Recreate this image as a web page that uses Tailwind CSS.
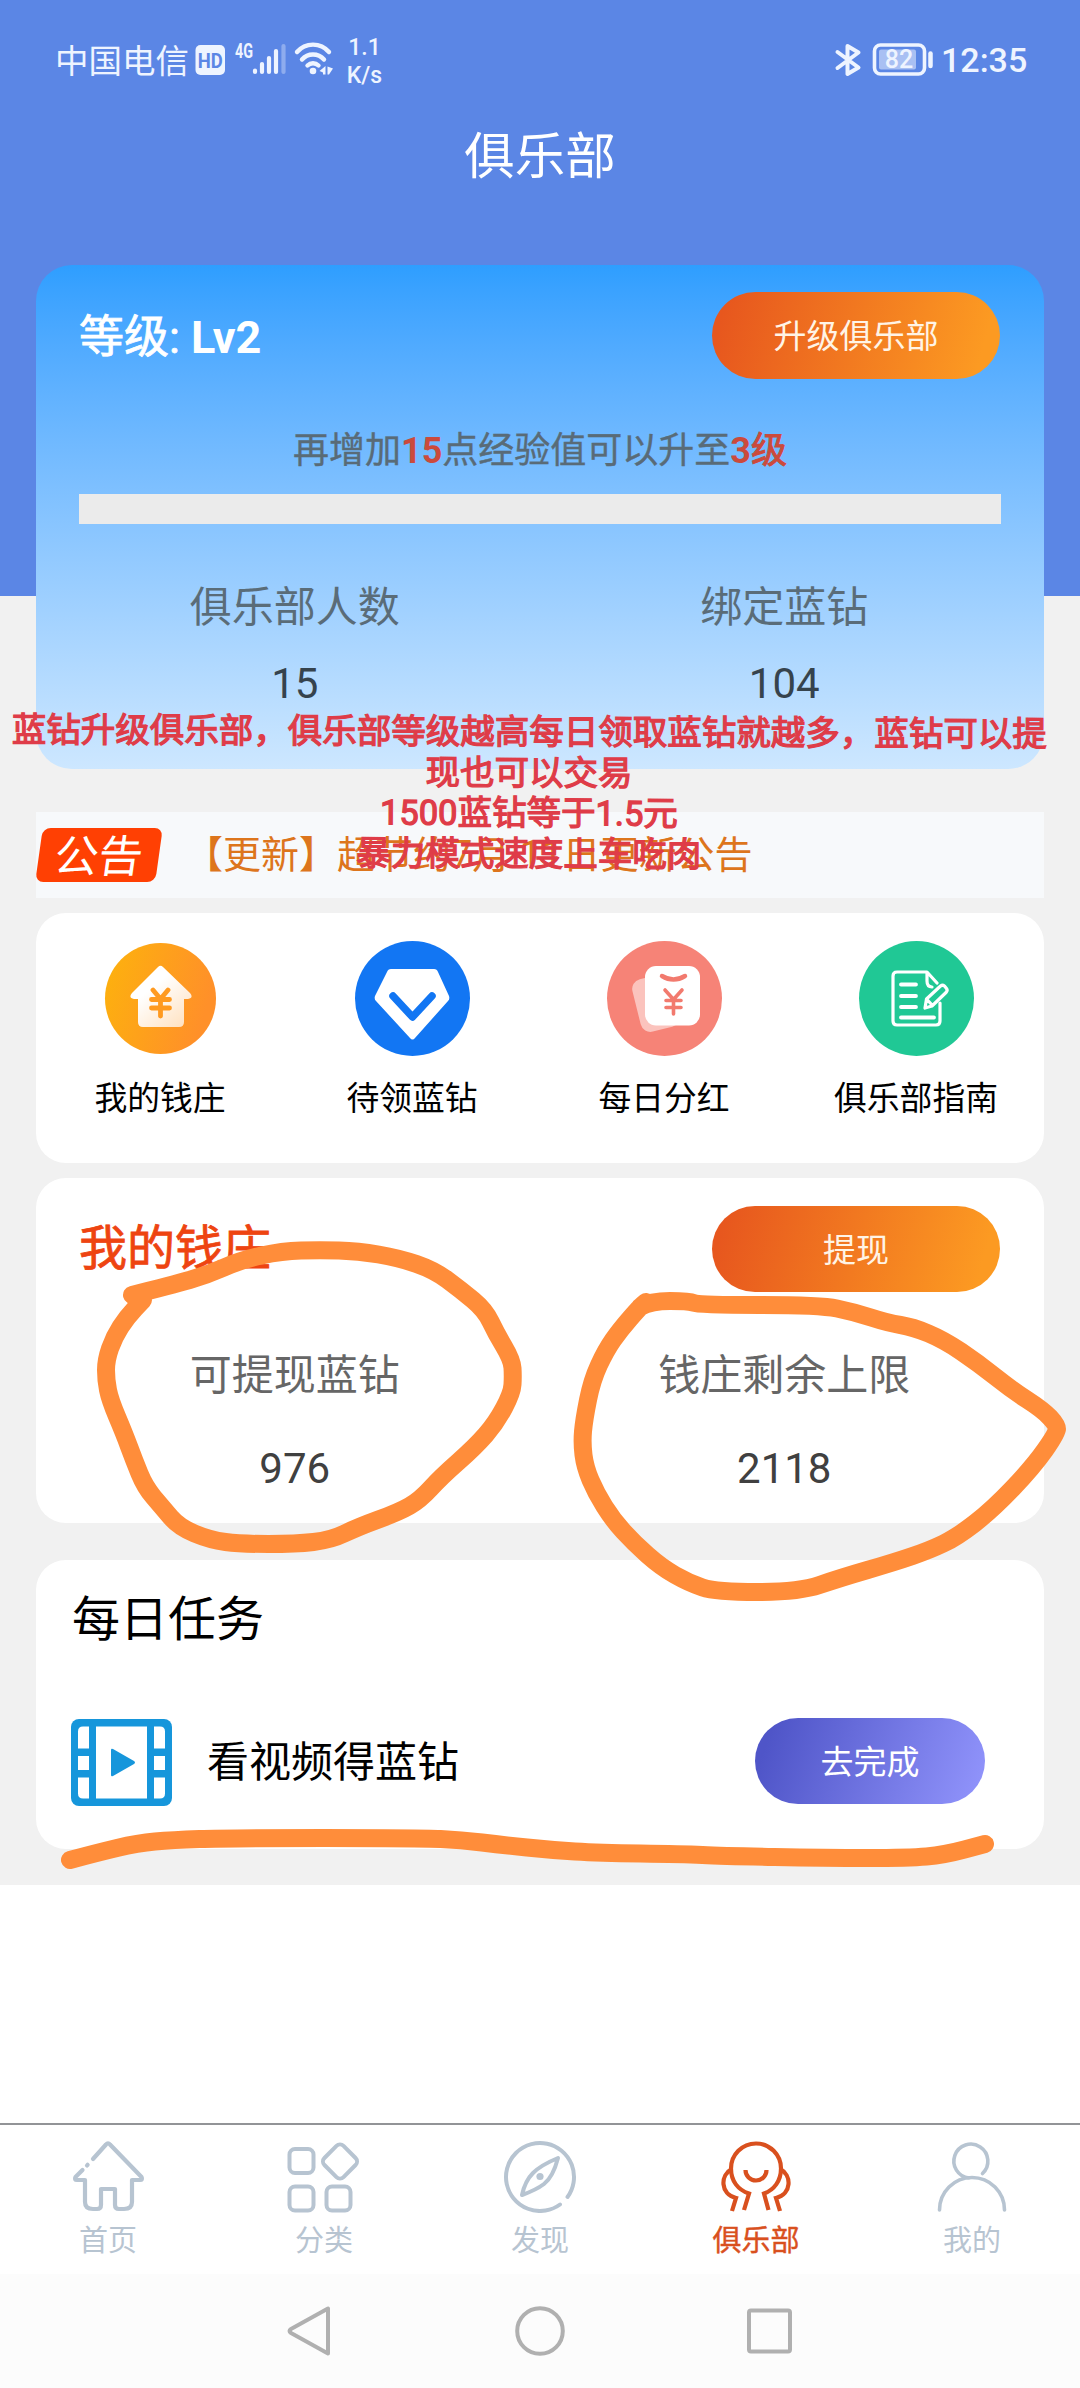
<!DOCTYPE html>
<html lang="zh-CN">
<head>
<meta charset="utf-8">
<title>俱乐部</title>
<script src="https://cdn.jsdelivr.net/npm/@tailwindcss/browser@4"></script>
</head>
<body class="bg-white">
<div class="relative flex h-[2388px] w-[1080px] flex-col overflow-hidden bg-white font-['Roboto','Noto_Sans_CJK_SC',sans-serif] text-black">

  <!-- status bar + title -->
  <header class="flex h-[265px] shrink-0 flex-col bg-[#5b86e5]">
    <div class="flex h-[120px] items-center justify-between pr-[55px] pl-[55px] text-[#eef4ff]">
      <div class="flex items-center">
        <span class="w-[135px] pt-[4px] text-[33.5px] leading-none whitespace-nowrap">中国电信</span>
        <svg class="h-[40px] w-[150px]" viewBox="190 40 150 40" fill="none">
          <rect x="195.500" y="45" width="29.500" height="30" rx="5" fill="#eef4ff"/>
          <text x="210.300" y="67.500" text-anchor="middle" font-size="21" font-weight="700" textLength="25" lengthAdjust="spacingAndGlyphs" fill="#5b86e5">HD</text>
          <text x="235" y="57.500" font-size="20" font-weight="700" textLength="18" lengthAdjust="spacingAndGlyphs" fill="#eef4ff">4G</text>
          <g stroke="#eef4ff" stroke-width="4.200" stroke-linecap="round">
            <path d="M255 70.500V72M262 64V72M269 58V72M276 51V72"/>
            <path d="M283.500 46V72" opacity=".35"/>
          </g>
          <g stroke="#eef4ff" stroke-width="4.400" stroke-linecap="round">
            <path d="M297 52a21 21 0 0 1 32 0M302 59.500a14.500 14.500 0 0 1 22 0M307.500 65.500a8 8 0 0 1 11 0"/>
          </g>
          <circle cx="313" cy="71" r="3.300" fill="#eef4ff"/>
          <path d="M319.500 71l6-5v8.500h-2.500v-2zM327.500 66.500l5.500 2-4 6h-1.500z" fill="#eef4ff"/>
        </svg>
        <div class="ml-[6px] flex w-[37px] flex-col items-center pt-[4px] text-[23px] leading-[28px] font-medium"><span>1.1</span><span>K/s</span></div>
      </div>
      <div class="flex items-center">
        <svg class="h-[40px] w-[110px]" viewBox="830 40 110 40" fill="none" stroke="#eef4ff">
          <path d="M837.500 52L858.500 67.500 847.500 74V46L858.500 52.500 837.500 68" stroke-width="4" stroke-linecap="round" stroke-linejoin="round"/>
          <rect x="874.500" y="45" width="50" height="29" rx="6" stroke-width="3.600"/>
          <rect x="879" y="49.500" width="37" height="20" rx="2" fill="#a9c0f3" stroke="none"/>
          <path d="M930.500 53.500V66" stroke-width="4.500" stroke-linecap="round"/>
          <text x="899" y="68" text-anchor="middle" font-size="25" font-weight="500" fill="#eef4ff" stroke="none">82</text>
        </svg>
        <span class="ml-[1px] w-[84px] text-[34px] leading-none font-medium whitespace-nowrap">12:35</span>
      </div>
    </div>
    <h1 class="flex h-[74px] items-center justify-center text-[50.5px] leading-none text-white">俱乐部</h1>
  </header>

  <main class="flex h-[1620px] shrink-0 flex-col bg-[linear-gradient(#5b86e5_331px,#f1f1f1_331px)] px-[36px]">
    <!-- level card -->
    <section class="flex h-[504px] shrink-0 flex-col rounded-[36px] bg-linear-to-b from-[#2e9eff] to-[#cde7ff] pt-[27px]">
      <div class="flex h-[87px] items-center justify-between pr-[44px] pl-[43px]">
        <h2 class="pt-[3px] text-[45px] leading-none text-white [-webkit-text-stroke:0.8px]">等级: <span class="font-bold [-webkit-text-stroke:0]">Lv2</span></h2>
        <button class="flex h-[87px] w-[288px] items-center justify-center rounded-full bg-[linear-gradient(105deg,#e7571e_5%,#fc9a22_92%)] pt-[2px] text-[33px] leading-none text-[#fff4e6]">升级俱乐部</button>
      </div>
      <p class="mt-[45px] flex h-[50px] items-center justify-center pt-[4px] text-[36px] leading-none text-[#596b77] [-webkit-text-stroke:0.4px]"><span>再增加<b class="font-bold text-[#cb4a3c] [-webkit-text-stroke:0]">15</b>点经验值可以升至<b class="font-bold text-[#cb4a3c] [-webkit-text-stroke:0]">3<span class="font-normal [-webkit-text-stroke:1px]">级</span></b></span></p>
      <div class="mx-[43px] mt-[20px] h-[30px] bg-[#ebebeb]"></div>
      <div class="mr-[15px] ml-[14px] mt-[52px] grid grid-cols-2 text-center">
        <div><div class="flex h-[60px] items-center justify-center pt-[4px] text-[42px] leading-none text-[#5a6c78]">俱乐部人数</div><div class="mt-[18px] flex h-[60px] items-center justify-center text-[42px] leading-none text-[#36434d]">15</div></div>
        <div><div class="flex h-[60px] items-center justify-center pt-[4px] text-[42px] leading-none text-[#5a6c78]">绑定蓝钻</div><div class="mt-[18px] flex h-[60px] items-center justify-center text-[42px] leading-none text-[#36434d]">104</div></div>
      </div>
    </section>

    <!-- notice -->
    <section class="mt-[43px] flex h-[86px] shrink-0 items-center bg-[#f7f9fb]">
      <div class="ml-[3px] flex h-[54px] w-[120px] -skew-x-8 items-center justify-center rounded-[8px] bg-[#ff4003] pt-[3px] text-[44px] leading-none font-normal text-white">公告</div>
      <p class="ml-[26px] text-[38px] leading-none whitespace-nowrap text-[#dd751c]">【更新】超节约7月 11日更新公告</p>
    </section>

    <!-- shortcuts -->
    <section class="mt-[15px] grid h-[250px] shrink-0 grid-cols-4 rounded-[30px] bg-white pt-[28px] text-[32.8px]">
      <a class="flex flex-col items-center -translate-x-[2px]">
        <svg class="size-[115px]" viewBox="0 0 115 115">
          <defs>
            <linearGradient id="gold" x1="0" y1="0" x2="1" y2=".3"><stop offset="0" stop-color="#fdb30c"/><stop offset="1" stop-color="#ff9029"/></linearGradient>
            <linearGradient id="wall" x1=".3" y1=".4" x2=".8" y2="1"><stop offset="0" stop-color="#fff"/><stop offset="1" stop-color="#ffe3c4"/></linearGradient>
          </defs>
          <circle cx="57.500" cy="57.500" r="55.500" fill="url(#gold)"/>
          <path d="M55 26q2.500-2.500 5 0L87 52q4 5-2 6h-4v23q0 5-5 5H40q-5 0-5-5V58h-4q-6-1-2-6z" fill="url(#wall)"/>
          <path d="M50 49l7.500 9 7.500-9M57.500 58v17M48.500 58.500h18M48.500 67h18" fill="none" stroke="#ff9a20" stroke-width="4.800" stroke-linecap="round" stroke-linejoin="round"/>
        </svg>
        <span class="mt-[27px] leading-none">我的钱庄</span>
      </a>
      <a class="flex flex-col items-center -translate-x-[2px]">
        <svg class="size-[115px]" viewBox="0 0 115 115">
          <circle cx="57.500" cy="57.500" r="57.500" fill="#1276f3"/>
          <path d="M36 28h43q3 0 4 3l11 24q1 3-1 5L60 97q-2.500 3-5 0L21 60q-2-2-1-5l12-24q1-3 4-3z" fill="#fff"/>
          <path d="M38 55l19.500 21L77 55" fill="none" stroke="#1276f3" stroke-width="7.500" stroke-linecap="round" stroke-linejoin="round"/>
        </svg>
        <span class="mt-[27px] leading-none">待领蓝钻</span>
      </a>
      <a class="flex flex-col items-center -translate-x-[2px]">
        <svg class="size-[115px]" viewBox="0 0 115 115">
          <circle cx="57.500" cy="57.500" r="57.500" fill="#f68377"/>
          <rect x="29" y="35" width="40" height="54" rx="10" fill="#fbc3bd" transform="rotate(-14 49 62)"/>
          <rect x="38" y="25" width="55" height="59.500" rx="11" fill="#fff"/>
          <g fill="none" stroke="#f27a6e" stroke-linecap="round" stroke-linejoin="round"><path d="M55 35q11.500 7 23 0" stroke-width="4.500"/><path d="M58 49l8.500 9.500 8.500-9.500M66.500 58v15M59 59.500h15M59 66.500h15" stroke-width="3.600"/></g>
        </svg>
        <span class="mt-[27px] leading-none">每日分红</span>
      </a>
      <a class="flex flex-col items-center -translate-x-[2px]">
        <svg class="size-[115px]" viewBox="0 0 115 115">
          <circle cx="57.500" cy="57.500" r="57.500" fill="#20c895"/>
          <g fill="none" stroke="#fff" stroke-width="3.200" stroke-linecap="round" stroke-linejoin="round">
            <path d="M81 62V80q0 4-4 4H38q-4 0-4-4V35q0-4 4-4h30l10 11M68 31v9q0 6 5 6"/>
            <path d="M42 43.500h15M42 55h15M42 66h15M42 76.500h33" stroke-width="3.800"/>
            <path d="M66 67l1.500-9 14-13q2-1.500 4 0l2 2.500q1.500 2-.5 4L73 65zM67.500 58l6 6.500"/>
          </g>
        </svg>
        <span class="mt-[27px] leading-none">俱乐部指南</span>
      </a>
    </section>

    <!-- bank -->
    <section class="mt-[15px] flex h-[345px] shrink-0 flex-col rounded-[30px] bg-white pt-[28px]">
      <div class="flex h-[86px] items-center justify-between pr-[44px] pl-[43px]">
        <h2 class="text-[48px] leading-none text-[#ee4411] [-webkit-text-stroke:0.8px]">我的钱庄</h2>
        <button class="flex h-[86px] w-[288px] items-center justify-center rounded-full bg-[linear-gradient(105deg,#e7571e_5%,#fc9a22_92%)] pt-[2px] text-[33px] leading-none text-[#fff4e6]">提现</button>
      </div>
      <div class="mr-[15px] ml-[14px] mt-[52px] grid grid-cols-2 text-center">
        <div><div class="flex h-[60px] items-center justify-center pt-[3px] text-[42px] leading-none text-[#666]">可提现蓝钻</div><div class="mt-[35px] flex h-[60px] items-center justify-center text-[42px] leading-none text-[#404040]">976</div></div>
        <div><div class="flex h-[60px] items-center justify-center pt-[3px] text-[42px] leading-none text-[#666]">钱庄剩余上限</div><div class="mt-[35px] flex h-[60px] items-center justify-center text-[42px] leading-none text-[#404040]">2118</div></div>
      </div>
    </section>

    <!-- daily tasks -->
    <section class="mt-[37px] flex h-[289px] shrink-0 flex-col rounded-[30px] bg-white pt-[27px]">
      <h2 class="flex h-[60px] items-center pt-[6px] pl-[36px] text-[48px] leading-none">每日任务</h2>
      <div class="mt-[71px] flex h-[86px] items-center pr-[59px] pl-[35px]">
        <svg class="mt-[2px] h-[87px] w-[101px] shrink-0" viewBox="0 0 101 87">
          <rect width="101" height="87" rx="8" fill="#1696db"/>
          <g fill="#fff">
            <rect x="25" y="7.500" width="51" height="72"/>
            <path d="M18 7.500h-6q-5 0-5 5v17h11zM7 37h11v14H7zM7 58.500h11v21h-6q-5 0-5-5zM83 7.500h6q5 0 5 5v17H83zM83 37h11v14H83zM83 58.500h11v16q0 5-5 5h-6z"/>
          </g>
          <path d="M40 31q0-2 2-1l21 12q2 1.500 0 3L42 57q-2 1-2-1z" fill="#1696db"/>
        </svg>
        <span class="ml-[35px] pt-[4px] text-[42px] leading-none">看视频得蓝钻</span>
        <button class="ml-auto flex h-[86px] w-[230px] items-center justify-center rounded-full bg-[linear-gradient(110deg,#4f55c8_8%,#8f92fa_95%)] pt-[2px] text-[33px] leading-none text-white">去完成</button>
      </div>
    </section>
  </main>

  <!-- tab bar -->
  <nav class="mt-[238px] grid h-[151px] shrink-0 grid-cols-5 border-t-2 border-[#929497] bg-white pt-[12px] text-[29px] text-[#b7c4d1]">
    <a class="flex flex-col items-center">
      <svg class="h-[76px] w-[76px]" viewBox="0 0 76 76" fill="none" stroke="currentColor" stroke-width="4.200" stroke-linecap="round" stroke-linejoin="round">
        <path d="M23 22L36 7.500q2-2.500 4 0L71.500 40q1.500 3-1.500 3h-8v22q0 7-8 7h-5q-4 0-4-4V52H31v16q0 4-4 4h-4q-8 0-8-7V43H7q-3 0-1.500-3l7-7M17 28.500l.6-.7"/>
      </svg>
      <span class="mt-[14px] leading-none">首页</span>
    </a>
    <a class="flex flex-col items-center">
      <svg class="h-[76px] w-[76px]" viewBox="0 0 76 76" fill="none" stroke="currentColor" stroke-width="4">
        <rect x="3.500" y="12" width="24" height="24" rx="5.500"/><rect x="3.500" y="49.500" width="24" height="24" rx="5.500"/><rect x="40.500" y="49.500" width="24" height="24" rx="5.500"/>
        <rect x="40.500" y="11" width="27" height="27" rx="5" transform="rotate(45 54 24.500)"/>
      </svg>
      <span class="mt-[14px] leading-none">分类</span>
    </a>
    <a class="flex flex-col items-center">
      <svg class="h-[76px] w-[76px]" viewBox="0 0 76 76" fill="none" stroke="currentColor" stroke-width="4" stroke-linecap="round" stroke-linejoin="round">
        <path d="M65.500 60A34 34 0 1 0 58 67.500"/>
        <path d="M56 21q-5 19-14 26-8 6-22 11 3-14 11-22 8-8 25-15z"/><circle cx="38" cy="39.500" r="3.600" fill="currentColor" stroke="none"/>
      </svg>
      <span class="mt-[14px] leading-none">发现</span>
    </a>
    <a class="flex flex-col items-center text-[#d9501e]">
      <svg class="h-[76px] w-[76px]" viewBox="0 0 76 76" fill="none" stroke="currentColor" stroke-width="4.200">
        <path d="M26 73l5-16.500C20 53 13 44 13 31.500a25 25 0 0 1 50 0C63 44 56 53 46 56.500L50.500 73"/>
        <path d="M14 32C2 38 2 57 18 61L14 74M62 32c12 6 12 25-4 29l4 13M27.500 33a10.500 10.500 0 0 0 21 0"/>
      </svg>
      <span class="mt-[14px] leading-none [-webkit-text-stroke:0.4px]">俱乐部</span>
    </a>
    <a class="flex flex-col items-center">
      <svg class="h-[76px] w-[76px]" viewBox="0 0 76 76" fill="none" stroke="currentColor" stroke-width="3.600" stroke-linecap="round">
        <path d="M48.500 36.500A17 17 0 1 0 35 41M5.500 73a32.500 32.500 0 0 1 65 0"/>
      </svg>
      <span class="mt-[14px] leading-none">我的</span>
    </a>
  </nav>

  <!-- system navigation -->
  <div class="flex h-[114px] shrink-0 items-center justify-center bg-[#fcfcfc]">
    <svg class="h-[60px] w-[520px]" viewBox="280 2301 520 60" fill="none" stroke="#b0b0b0" stroke-width="4" stroke-linejoin="round">
      <path d="M328 2308.500V2353.500L291 2333q-3-2 0-4z"/>
      <circle cx="540" cy="2331" r="22.800"/>
      <rect x="749" y="2310.500" width="41" height="41" rx="2"/>
    </svg>
  </div>

  <!-- caption laid over the page -->
  <p class="absolute top-[712px] left-[-6px] w-[1070px] rotate-[0.25deg] text-center text-[34.5px] leading-[40.5px] font-normal whitespace-nowrap text-[#df3c48] [-webkit-text-stroke:1.3px]">蓝钻升级俱乐部，俱乐部等级越高每日领取蓝钻就越多，蓝钻可以提<br>现也可以交易<br>1500蓝钻等于1.5元<br>暴力模式速度上车吃肉</p>

  <!-- hand-drawn marks -->
  <svg id="marks" class="pointer-events-none absolute inset-0 h-[2388px] w-[1080px]" viewBox="0 0 1080 2388" fill="none" stroke="#ff8d3a" stroke-width="18" stroke-linecap="round" stroke-linejoin="round">
    <path d="M132 1295L172 1285 207 1275 241 1260 282 1251 320 1250 358 1251 399 1258 434 1270 461 1290 485 1310 496 1333 512 1360 513 1376 512 1393 496 1423 475 1447 441 1477 420 1500 399 1512 358 1527 331 1540 296 1544 241 1544 210 1540 179 1527 162 1507 145 1487 134 1460 124 1433 110 1400 106 1380 106 1360 114 1337 127 1317 143 1300"/>
    <path d="M640 1307L651 1301 689 1301 699 1305 820 1305 854 1312 888 1323 913 1327 944 1340 978 1363 1012 1390 1043 1410 1057 1425 1057 1433 1033 1467 992 1510 957 1537 930 1550 895 1562 840 1578 799 1592 716 1592 689 1583 661 1567 634 1543 613 1520 596 1493 585 1467 582 1443 584 1420 592 1380 606 1350 620 1330 640 1307 646 1302"/>
    <path d="M70 1860L96 1853 138 1843 172 1840 227 1838 420 1838 461 1840 503 1845 551 1850 599 1853 682 1854 723 1856 826 1858 909 1858 944 1855 985 1844"/>
  </svg>
</div>
<script>
  // round off the corners of each stroke by curving through segment midpoints
  document.querySelectorAll('#marks path').forEach(function (path) {
    var n = path.getAttribute('d').match(/\d+/g).map(Number), p = [];
    for (var i = 0; i < n.length; i += 2) p.push([n[i], n[i + 1]]);
    var d = 'M' + p[0];
    for (i = 1; i < p.length - 1; i++) {
      d += 'Q' + p[i] + ' ' + (p[i][0] + p[i + 1][0]) / 2 + ',' + (p[i][1] + p[i + 1][1]) / 2;
    }
    path.setAttribute('d', d + 'L' + p[p.length - 1]);
  });
</script>
</body>
</html>
